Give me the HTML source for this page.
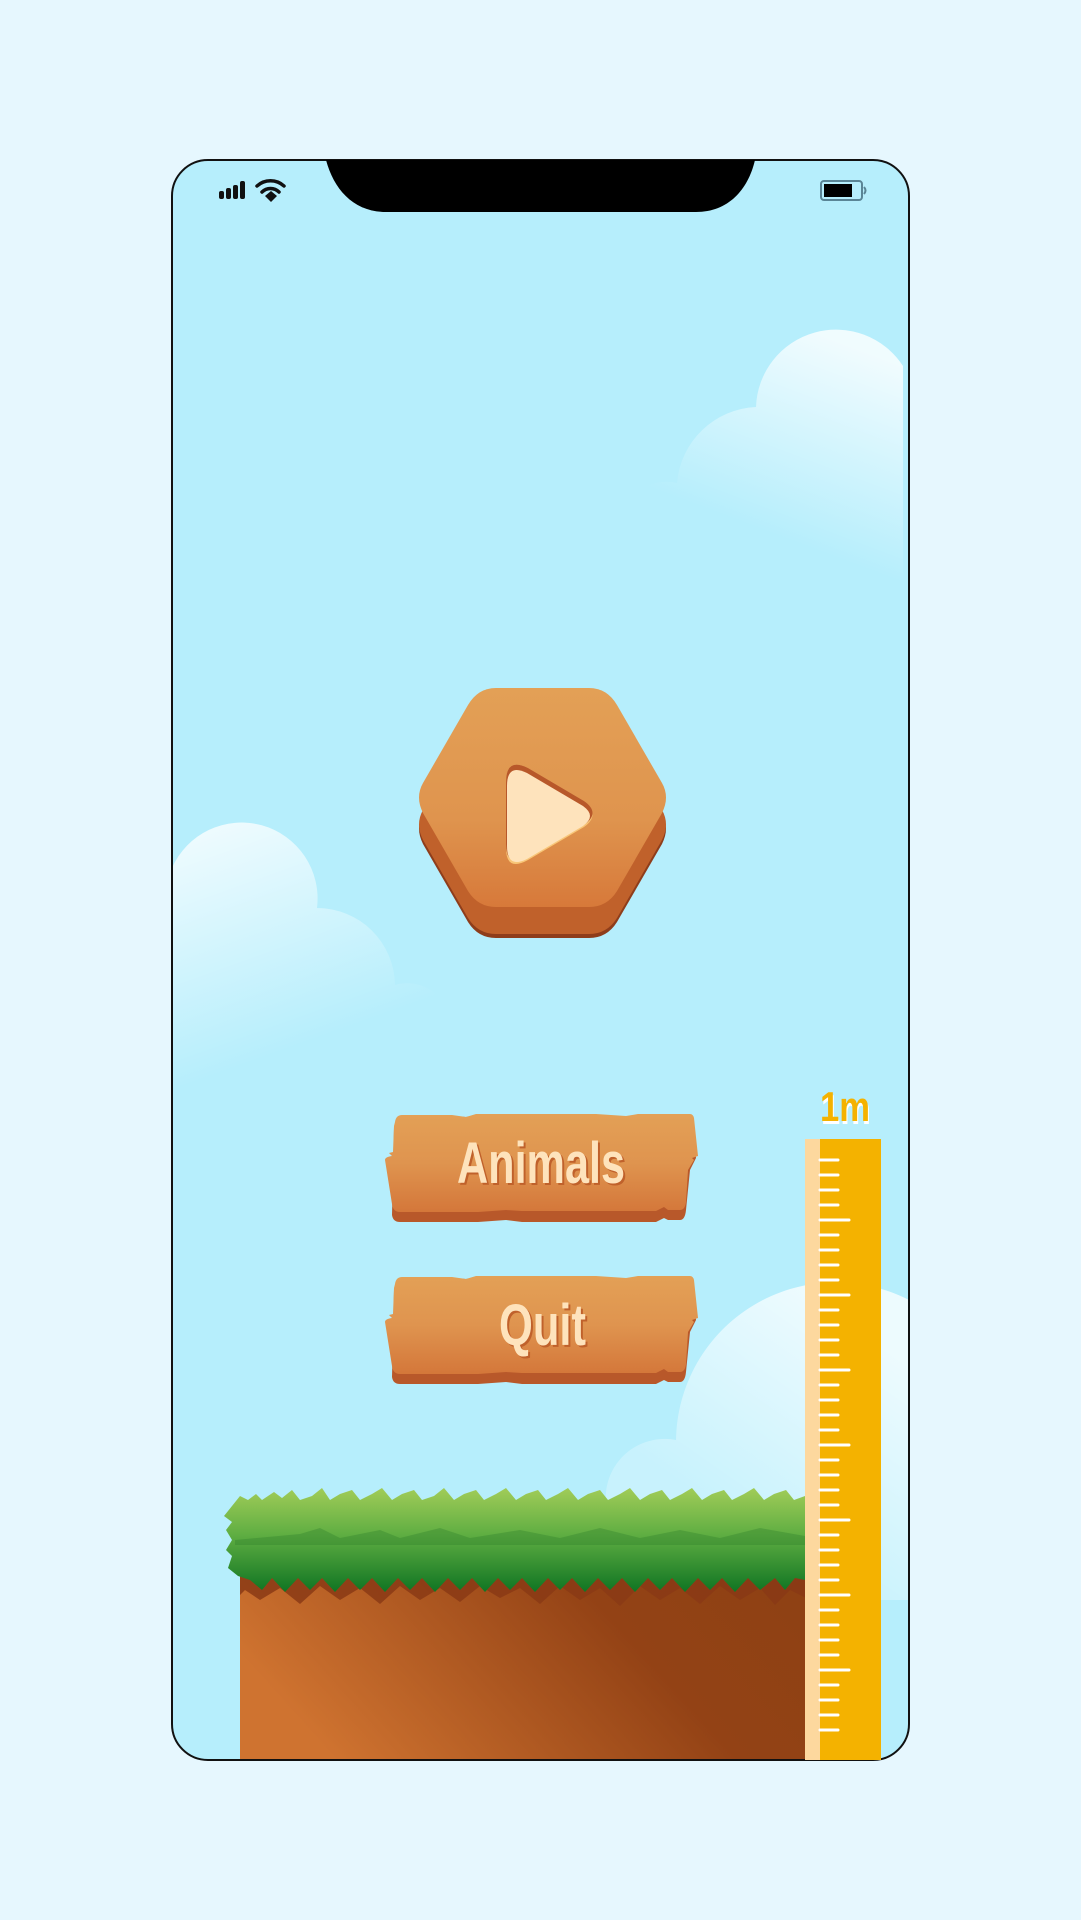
<!DOCTYPE html>
<html><head><meta charset="utf-8"><style>
html,body{margin:0;padding:0;background:#e6f7fe;}
svg{display:block}
</style></head><body>
<svg width="1081" height="1920" viewBox="0 0 1081 1920" xmlns="http://www.w3.org/2000/svg">
<defs>
<clipPath id="scr"><rect x="172" y="160" width="737" height="1600" rx="36"/></clipPath>
<clipPath id="cl1"><rect x="172" y="160" width="731" height="1600"/></clipPath>
<linearGradient id="c1" x1="0.75" y1="0" x2="0.45" y2="0.6"><stop offset="0" stop-color="#fff" stop-opacity="0.8"/><stop offset="1" stop-color="#fff" stop-opacity="0"/></linearGradient>
<linearGradient id="c2" x1="0.2" y1="0" x2="0.55" y2="0.75"><stop offset="0" stop-color="#fff" stop-opacity="0.75"/><stop offset="1" stop-color="#fff" stop-opacity="0"/></linearGradient>
<linearGradient id="c3" x1="0.6" y1="0" x2="0.2" y2="0.6"><stop offset="0" stop-color="#fff" stop-opacity="0.75"/><stop offset="1" stop-color="#fff" stop-opacity="0.25"/></linearGradient>
<linearGradient id="hex" x1="0" y1="0" x2="0" y2="1"><stop offset="0" stop-color="#e3a056"/><stop offset="0.6" stop-color="#df944e"/><stop offset="1" stop-color="#d7793a"/></linearGradient>
<linearGradient id="plank" x1="0" y1="0" x2="0" y2="1"><stop offset="0" stop-color="#e3a056"/><stop offset="0.5" stop-color="#df944f"/><stop offset="1" stop-color="#d4773a"/></linearGradient>
<linearGradient id="dirt" x1="0" y1="0.6" x2="1" y2="0.3"><stop offset="0.05" stop-color="#cf7330"/><stop offset="0.7" stop-color="#934215"/><stop offset="1" stop-color="#8f4114"/></linearGradient>
<linearGradient id="grass" x1="0" y1="0" x2="0" y2="1"><stop offset="0" stop-color="#a1cc58"/><stop offset="0.45" stop-color="#5fae42"/><stop offset="1" stop-color="#107523"/></linearGradient>
</defs>
<rect x="172" y="160" width="737" height="1600" rx="36" fill="#b6eefc"/>
<g clip-path="url(#scr)">
 <g fill="url(#c1)" clip-path="url(#cl1)">
  <path d="M520 620 A70 70 0 0 1 623 538 A45 45 0 0 1 677 483 A83 83 0 0 1 756 407 A80 80 0 0 1 903 366 L903 620 Z"/>
 </g>
 <path fill="url(#c2)" d="M172 868 A76 76 0 0 1 317 908 A78 78 0 0 1 395 985 A43 43 0 0 1 450 1032 A70 70 0 0 1 520 1090 L172 1090 Z"/>
 <path fill="url(#c3)" d="M610 1520 A59 59 0 0 1 676 1440 A160 160 0 0 1 909 1300 L909 1600 L610 1600 Z"/>
 <rect x="240" y="1575" width="570" height="190" fill="url(#dirt)"/>
 <path fill="#8a3a15" opacity="0.85" d="M240 1570 L810 1570 L810 1600 L790 1590 L775 1605 L760 1588 L740 1600 L720 1586 L700 1604 L680 1588 L660 1600 L640 1586 L620 1606 L600 1588 L580 1600 L560 1586 L540 1604 L520 1588 L500 1598 L480 1586 L460 1602 L440 1588 L420 1600 L400 1586 L380 1604 L360 1588 L340 1600 L320 1586 L300 1604 L280 1588 L260 1600 L245 1590 L240 1595 Z"/>
 <path fill="url(#grass)" d="M232 1506 L240 1496 L248 1500 L256 1494 L262 1500 L274 1492 L282 1498 L292 1490 L300 1500 L312 1496 L322 1488 L330 1500 L340 1494 L352 1490 L360 1500 L372 1494 L382 1488 L392 1500 L402 1494 L414 1490 L422 1500 L434 1496 L444 1488 L454 1500 L464 1494 L476 1490 L484 1500 L496 1494 L506 1488 L516 1500 L526 1494 L538 1490 L546 1500 L558 1494 L568 1488 L578 1500 L588 1494 L600 1490 L608 1500 L620 1494 L630 1488 L640 1500 L650 1494 L662 1490 L670 1500 L682 1494 L692 1488 L702 1500 L712 1494 L724 1490 L732 1500 L744 1494 L754 1488 L764 1500 L774 1494 L786 1490 L794 1500 L805 1496 L805 1580 L795 1578 L785 1590 L775 1578 L760 1590 L748 1578 L735 1592 L722 1578 L710 1590 L698 1578 L685 1592 L672 1578 L660 1590 L648 1578 L635 1592 L622 1578 L610 1590 L598 1578 L585 1592 L572 1578 L560 1590 L548 1578 L535 1592 L522 1578 L510 1590 L498 1578 L485 1592 L472 1578 L460 1590 L448 1578 L435 1592 L422 1578 L410 1590 L398 1578 L385 1592 L372 1578 L360 1590 L348 1578 L335 1592 L322 1578 L310 1590 L298 1578 L285 1592 L272 1578 L262 1590 L250 1580 L238 1576 L228 1568 L232 1556 L226 1550 L232 1540 L226 1530 L232 1522 L224 1516 Z"/>
 <path fill="#2e7f2a" opacity="0.35" d="M235 1540 L300 1534 L320 1528 L340 1538 L380 1530 L400 1538 L440 1528 L470 1538 L520 1530 L560 1538 L600 1528 L640 1538 L680 1530 L720 1538 L760 1528 L805 1536 L805 1545 L235 1545 Z"/>
</g>
<rect x="172" y="160" width="737" height="1600" rx="36" fill="none" stroke="#111" stroke-width="2"/>
<path d="M326 160 L755 160 C748 190 728 212 696 212 L386 212 C354 212 334 190 326 160 Z" fill="#000"/>
<g fill="#111">
 <rect x="219" y="191" width="5" height="8" rx="2"/>
 <rect x="226" y="188" width="5" height="11" rx="2"/>
 <rect x="233" y="185" width="5" height="14" rx="2"/>
 <rect x="240" y="181" width="5" height="18" rx="2"/>
</g>
<g fill="none" stroke="#111" stroke-width="3.5" stroke-linecap="round">
 <path d="M257 186 A20 20 0 0 1 284 186"/>
 <path d="M262 192 A12 12 0 0 1 279 192"/>
</g>
<path d="M265 196 L271 191 L277 196 L271 202 Z" fill="#111"/>
<rect x="821" y="181" width="41" height="19" rx="3" fill="none" stroke="#5a8596" stroke-width="2"/>
<rect x="824" y="184" width="28" height="13" fill="#000"/>
<path d="M864 187 Q867 190.5 864 194" stroke="#5a8596" stroke-width="2" fill="none"/>
<path d="M496 703 L589 703 Q607 703 617 720 L662 798 Q670 812 662 828 L617 906 Q607 922 589 922 L496 922 Q478 922 468 906 L423 828 Q415 812 423 798 L468 720 Q478 703 496 703 Z" transform="translate(0,16)" fill="#8e3d1b"/>
<path d="M496 703 L589 703 Q607 703 617 720 L662 798 Q670 812 662 828 L617 906 Q607 922 589 922 L496 922 Q478 922 468 906 L423 828 Q415 812 423 798 L468 720 Q478 703 496 703 Z" transform="translate(0,12)" fill="#c0612b"/>
<path d="M496 688 L589 688 Q607 688 617 705 L662 783 Q670 797 662 813 L617 891 Q607 907 589 907 L496 907 Q478 907 468 891 L423 813 Q415 797 423 783 L468 705 Q478 688 496 688 Z" fill="url(#hex)"/>
<path d="M506 782 Q506 757 528 768 L584 801 Q601 815 584 827 L528 860 Q506 872 506 848 Z" fill="#f8c678"/>
<path d="M506 784 Q506 759 528 770 L584 803 Q601 815 584 827 L528 860 Q506 871 506 846 Z" fill="#b8582a" transform="translate(0,-2)"/>
<path d="M507 786 Q507 763 527 773 L583 806 Q597 816 583 826 L527 859 Q507 869 507 846 Z" fill="#fee3bc"/>
<g id="p1">
<path d="M394 1128 L395 1124 Q396 1116 402 1116 L452 1116 L466 1117 L476 1115 L596 1115 L626 1117 L638 1115 L690 1115 Q692 1115 693 1120 L696 1158 L690 1170 L686 1210 Q685 1220 680 1220 L668 1220 L664 1218 L656 1222 L522 1222 L506 1220 L478 1222 L400 1222 Q393 1222 392 1215 Z" fill="#b8582a"/>
<path d="M394 1126 L395 1122 Q396 1115 402 1115 L452 1115 L466 1117 L476 1114 L596 1114 L626 1116 L638 1114 L690 1114 Q693 1114 694 1118 L698 1156 L692 1158 L694 1160 L688 1170 L686 1202 Q685 1210 680 1210 L668 1210 L664 1207 L656 1211 L522 1211 L506 1210 L478 1212 L400 1212 Q393 1212 392 1204 L385 1160 Q385 1157 392 1156 L389 1153 L393 1152 Z" fill="url(#plank)"/>
</g>
<use href="#p1" transform="translate(0,162)"/>
<g font-family="'Liberation Sans',sans-serif" font-weight="bold" lengthAdjust="spacingAndGlyphs">
 <text x="459" y="1185" font-size="58" fill="#c0612b" textLength="168" lengthAdjust="spacingAndGlyphs">Animals</text>
 <text x="457" y="1183" font-size="58" fill="#fee3bc" textLength="168" lengthAdjust="spacingAndGlyphs">Animals</text>
 <text x="501" y="1347" font-size="58" fill="#c0612b" textLength="87" lengthAdjust="spacingAndGlyphs">Quit</text>
 <text x="499" y="1345" font-size="58" fill="#fee3bc" textLength="87" lengthAdjust="spacingAndGlyphs">Quit</text>
 <text x="821" y="1124" font-size="42" fill="#fff" textLength="50" lengthAdjust="spacingAndGlyphs">1m</text>
 <text x="820" y="1121" font-size="42" fill="#f4b200" textLength="50" lengthAdjust="spacingAndGlyphs">1m</text>
</g>
<rect x="805" y="1139" width="76" height="621" fill="#f4b200"/>
<rect x="805" y="1139" width="15" height="621" fill="#fdd89e"/>
<g stroke="#fff" stroke-width="3" stroke-linecap="round">
<path d="M820 1160h18M820 1175h18M820 1190h18M820 1205h18M820 1220h29M820 1235h18M820 1250h18M820 1265h18M820 1280h18M820 1295h29M820 1310h18M820 1325h18M820 1340h18M820 1355h18M820 1370h29M820 1385h18M820 1400h18M820 1415h18M820 1430h18M820 1445h29M820 1460h18M820 1475h18M820 1490h18M820 1505h18M820 1520h29M820 1535h18M820 1550h18M820 1565h18M820 1580h18M820 1595h29M820 1610h18M820 1625h18M820 1640h18M820 1655h18M820 1670h29M820 1685h18M820 1700h18M820 1715h18M820 1730h18"/>
</g>
</svg>
</body></html>
